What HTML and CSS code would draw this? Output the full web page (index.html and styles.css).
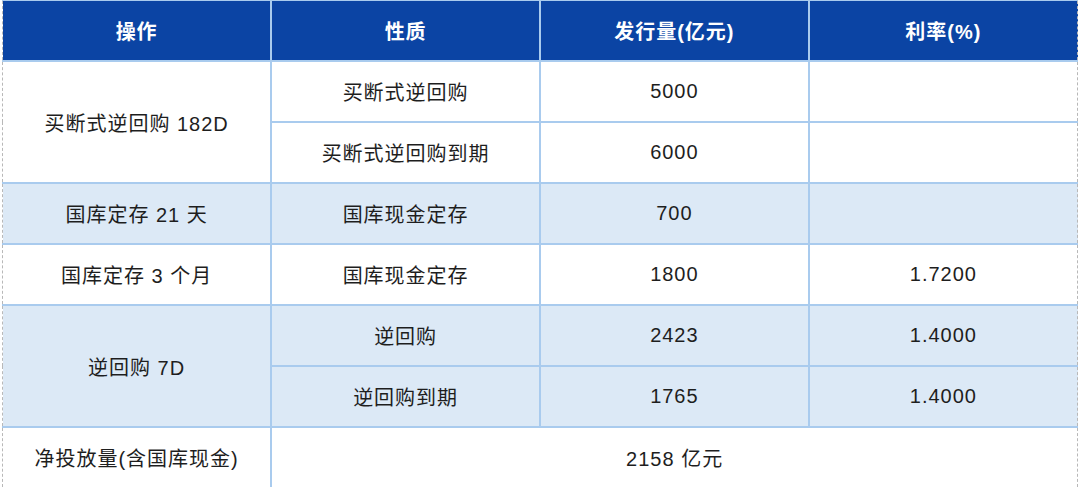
FILE: index.html
```html
<!DOCTYPE html>
<html lang="zh">
<head>
<meta charset="utf-8">
<link rel="stylesheet" href="styles.css">
</head>
<body>
<div class="wrap">
<table class="tbl">
  <colgroup><col><col><col><col></colgroup>
  <thead>
    <tr><th>操作</th><th>性质</th><th>发行量(亿元)</th><th>利率(%)</th></tr>
  </thead>
  <tbody>
    <tr class="w"><td rowspan="2">买断式逆回购 182D</td><td>买断式逆回购</td><td>5000</td><td></td></tr>
    <tr class="w"><td>买断式逆回购到期</td><td>6000</td><td></td></tr>
    <tr class="b"><td>国库定存 21 天</td><td>国库现金定存</td><td>700</td><td></td></tr>
    <tr class="w"><td>国库定存 3 个月</td><td>国库现金定存</td><td>1800</td><td>1.7200</td></tr>
    <tr class="b"><td rowspan="2">逆回购 7D</td><td>逆回购</td><td>2423</td><td>1.4000</td></tr>
    <tr class="b"><td>逆回购到期</td><td>1765</td><td>1.4000</td></tr>
    <tr class="w last"><td>净投放量(含国库现金)</td><td colspan="3">2158 亿元</td></tr>
  </tbody>
</table>
</div>
</body>
</html>
```

FILE: styles.css
```css
html, body {
  margin: 0;
  padding: 0;
  background: #ffffff;
}
.wrap {
  padding: 0 2px 0 2px;
}
.tbl {
  width: 1076px;
  table-layout: fixed;
  border-collapse: collapse;
  font-family: "Liberation Sans", "Noto Sans CJK SC", sans-serif;
  font-size: 20px;
  letter-spacing: 1px;
  color: #1e1e1e;
  border-left: 1px dashed #b8b8b8;
  border-right: 1px dashed #b8b8b8;
}
.tbl col {
  width: 25%;
}
.tbl th {
  background: #0b44a4;
  color: #ffffff;
  font-weight: bold;
  height: 59px;
  padding: 0;
  text-align: center;
  vertical-align: middle;
  border-top: 1px solid #a9cbee;
  border-bottom: 2px solid #a9cbee;
  border-left: 2px solid #a9cbee;
}
.tbl th:first-child {
  border-left: 1px dashed #b8b8b8;
}
.tbl td {
  height: 59px;
  padding: 0;
  text-align: center;
  vertical-align: middle;
  border: 2px solid #a9cbee;
}
.tbl td:first-child {
  border-left: 1px dashed #b8b8b8;
}
.tbl tr.b + tr.b td:first-child {
  border-left: 2px solid #a9cbee;
}
.tbl tr.w + tr.w:not(.last) td:first-child {
  border-left: 2px solid #a9cbee;
}
.tbl td:last-child {
  border-right: 1px dashed #b8b8b8;
}
.tbl tr.w td {
  background: #ffffff;
}
.tbl tr.b td {
  background: #dce9f6;
}
.tbl tr.last td {
  border-bottom: 3px solid #a9cbee;
}
```
